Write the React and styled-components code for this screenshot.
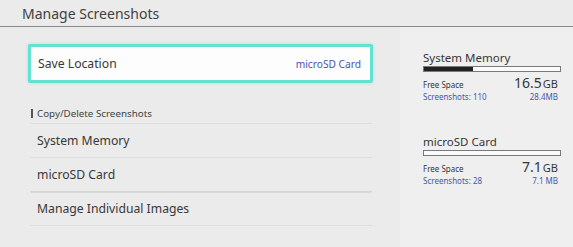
import styled, { createGlobalStyle } from "styled-components";

const GlobalStyle = createGlobalStyle`
  html, body {
    margin: 0;
    padding: 0;
    background: #ebebeb;
  }
  body {
    font-family: "Noto Sans", "Open Sans", sans-serif;
    color: #3a3a3a;
  }
`;

const Screen = styled.div`
  width: 573px;
  height: 247px;
  overflow: hidden;
  background: #ebebeb;
`;

const Header = styled.div`
  height: 26px;
  border-bottom: 1px solid #8c8c8c;
  display: flex;
  align-items: center;
  padding-left: 22px;
  font-size: 14px;
  color: #404040;
`;

const Main = styled.div`
  display: flex;
  height: 220px;
`;

const LeftColumn = styled.div`
  width: 400px;
  box-sizing: border-box;
  padding: 17px 27px 0 28px;
`;

const SaveBox = styled.div`
  height: 39px;
  box-sizing: border-box;
  border: 3px solid #62e2d0;
  border-radius: 2px;
  background: #fdfdfd;
  display: flex;
  align-items: center;
  justify-content: space-between;
  padding: 0 9px 0 7px;
  box-shadow: 0 0 3px rgba(98, 226, 208, 0.5);
`;

const RowLabel = styled.span`
  font-size: 12.2px;
  color: #383838;
`;

const SaveValue = styled.span`
  font-size: 10.2px;
  color: #4a55a8;
`;

const List = styled.div`
  margin-left: 2px;
  margin-right: 1px;
`;

const SectionTitle = styled.div`
  margin-top: 21px;
  height: 19px;
  display: flex;
  align-items: center;
  font-size: 9.8px;
  color: #444;
  border-bottom: 1px solid #dedede;

  &::before {
    content: "";
    width: 2px;
    height: 9px;
    background: #555;
    margin: 0 4px 0 1px;
  }
`;

const Row = styled.div`
  height: 33px;
  display: flex;
  align-items: center;
  padding-left: 7px;
  border-bottom: 1px solid ${(props) => (props.double ? "#d6d6d6" : "#dedede")};
  box-shadow: ${(props) => (props.double ? "0 2px 0 -1px #d9d9d9" : "none")};
`;

const RightPanel = styled.div`
  flex: 1;
  background: #efefef;
  padding: 24px 12px 0 23px;
  box-sizing: border-box;
`;

const Storage = styled.div`
  margin-bottom: ${(props) => props.gap || "0px"};
`;

const StorageName = styled.div`
  font-size: 11.5px;
  color: #363636;
  line-height: 14px;
`;

const Bar = styled.div`
  margin-top: 1px;
  height: 6px;
  border: 1px solid #7a7a7a;
  background: #fafafa;
  box-sizing: border-box;
`;

const Fill = styled.div`
  height: 100%;
  background: #222;
`;

const InfoRow = styled.div`
  display: flex;
  justify-content: space-between;
  align-items: baseline;
  padding-right: 3px;
  margin-top: ${(props) => props.top || "0px"};
  color: ${(props) => (props.blue ? "#4a55b0" : "#363636")};
  font-size: 8px;
  line-height: 12px;
`;

const Big = styled.span`
  font-size: 14px;
  color: #363636;
`;

const Unit = styled.span`
  font-size: 11px;
  margin-left: 1px;
`;

const storages = [
  { name: "System Memory", used: 36, free: "16.5", shots: 110, size: "28.4MB" },
  { name: "microSD Card", used: 0, free: "7.1", shots: 28, size: "7.1 MB" },
];

const App = () => {
  return (
    <Screen>
      <GlobalStyle />
      <Header>Manage Screenshots</Header>
      <Main>
        <LeftColumn>
          <SaveBox>
            <RowLabel>Save Location</RowLabel>
            <SaveValue>microSD Card</SaveValue>
          </SaveBox>
          <List>
            <SectionTitle>Copy/Delete Screenshots</SectionTitle>
            <Row>
              <RowLabel>System Memory</RowLabel>
            </Row>
            <Row double>
              <RowLabel>microSD Card</RowLabel>
            </Row>
            <Row>
              <RowLabel>Manage Individual Images</RowLabel>
            </Row>
          </List>
        </LeftColumn>
        <RightPanel>
          {storages.map((s, i) => (
            <Storage key={s.name} gap={i === 0 ? "32px" : "0px"}>
              <StorageName>{s.name}</StorageName>
              <Bar>
                <Fill style={{ width: `${s.used}%` }} />
              </Bar>
              <InfoRow top="5px">
                <span>Free Space</span>
                <Big>
                  {s.free}
                  <Unit>GB</Unit>
                </Big>
              </InfoRow>
              <InfoRow blue>
                <span>Screenshots: {s.shots}</span>
                <span>{s.size}</span>
              </InfoRow>
            </Storage>
          ))}
        </RightPanel>
      </Main>
    </Screen>
  );
};

export default App;
